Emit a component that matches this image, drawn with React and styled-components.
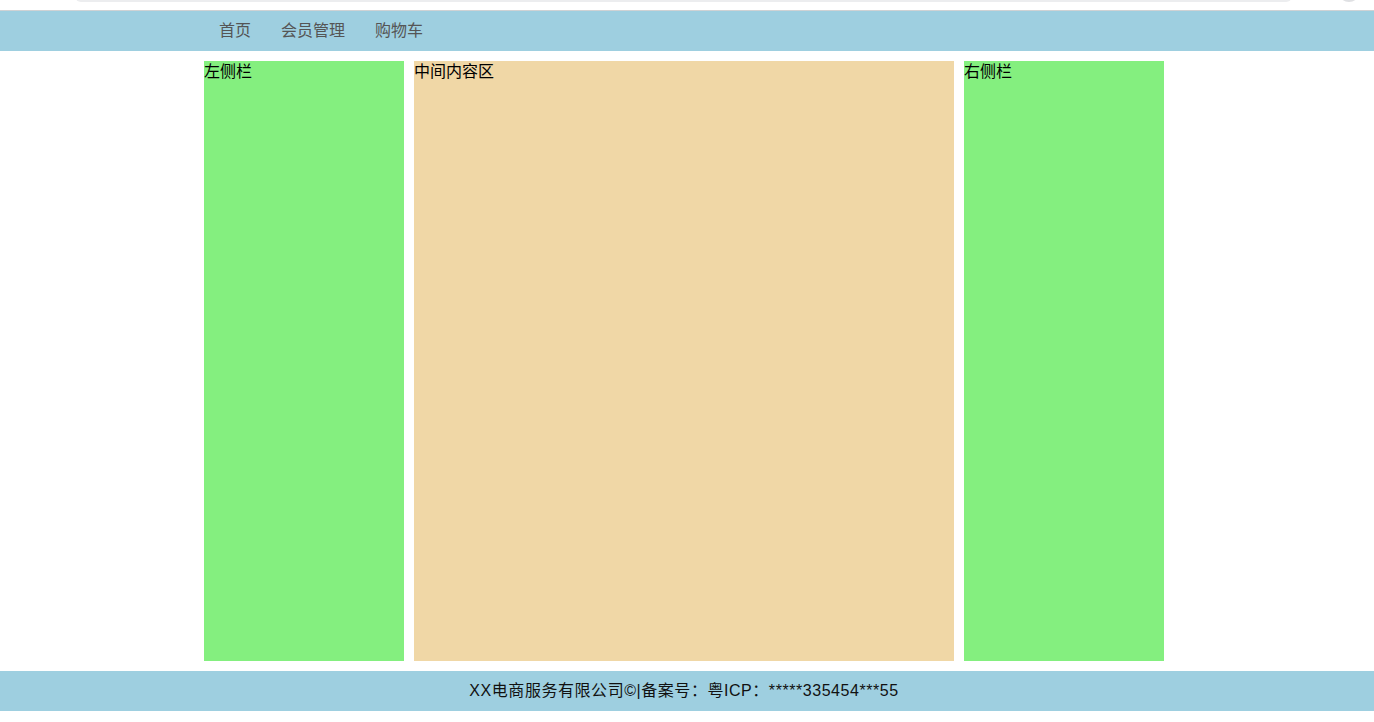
import React from 'react'
import styled, { createGlobalStyle } from 'styled-components'

const GlobalStyle = createGlobalStyle`
  html, body {
    margin: 0;
    padding: 0;
    background: #ffffff;
    font-family: "Liberation Sans", Arial, "Noto Sans CJK SC", sans-serif;
    font-size: 16px;
  }
`

export const Chrome = styled.div`
  height: 10px;
  display: flex;
  align-items: flex-start;
  padding: 0 14px 0 75px;
  gap: 46px;
  overflow: hidden;
  border-bottom: 1px solid #cfd2d4;
`

export const AddressBar = styled.div`
  flex: 1;
  height: 6px;
  margin-top: -4px;
  background: #ecedef;
  border-radius: 0 0 12px 12px;
`

export const ChromeButton = styled.div`
  width: 22px;
  height: 22px;
  margin-top: -20px;
  border-radius: 50%;
  background: #dfe0e3;
`

export const Header = styled.header`
  height: 40px;
  background: #9ecfe0;
`

export const Inner = styled.div`
  width: 960px;
  margin-left: calc(50% - 483px);
`

export const Nav = styled(Inner)`
  display: flex;
  height: 100%;
  align-items: center;
`

export const NavLink = styled.a`
  padding: 0 15px;
  line-height: 40px;
  font-size: 16px;
  color: #555555;
  text-decoration: none;
  cursor: pointer;
`

export const Main = styled(Inner)`
  display: flex;
  gap: 10px;
  padding: 10px 0;
`

export const Column = styled.section`
  width: ${p => p.width}px;
  height: 600px;
  background: ${p => p.bg};
  color: #000000;
  font-size: 16px;
  line-height: 22px;
`

export const Footer = styled.footer`
  height: 40px;
  background: #9ecfe0;
`

export const FooterText = styled(Inner)`
  text-align: center;
  line-height: 40px;
  font-size: 16px;
  letter-spacing: 0.55px;
  color: #111111;
`

const links = ['首页', '会员管理', '购物车']

export default function App () {
  return (
    <>
      <GlobalStyle />
      <Chrome>
        <AddressBar />
        <ChromeButton />
      </Chrome>
      <Header>
        <Nav>
          {links.map(l => <NavLink key={l}>{l}</NavLink>)}
        </Nav>
      </Header>
      <Main>
        <Column width={200} bg='#84ef7f'>左侧栏</Column>
        <Column width={540} bg='#f0d7a6'>中间内容区</Column>
        <Column width={200} bg='#84ef7f'>右侧栏</Column>
      </Main>
      <Footer>
        <FooterText>XX电商服务有限公司©|备案号：粤ICP：*****335454***55</FooterText>
      </Footer>
    </>
  )
}
